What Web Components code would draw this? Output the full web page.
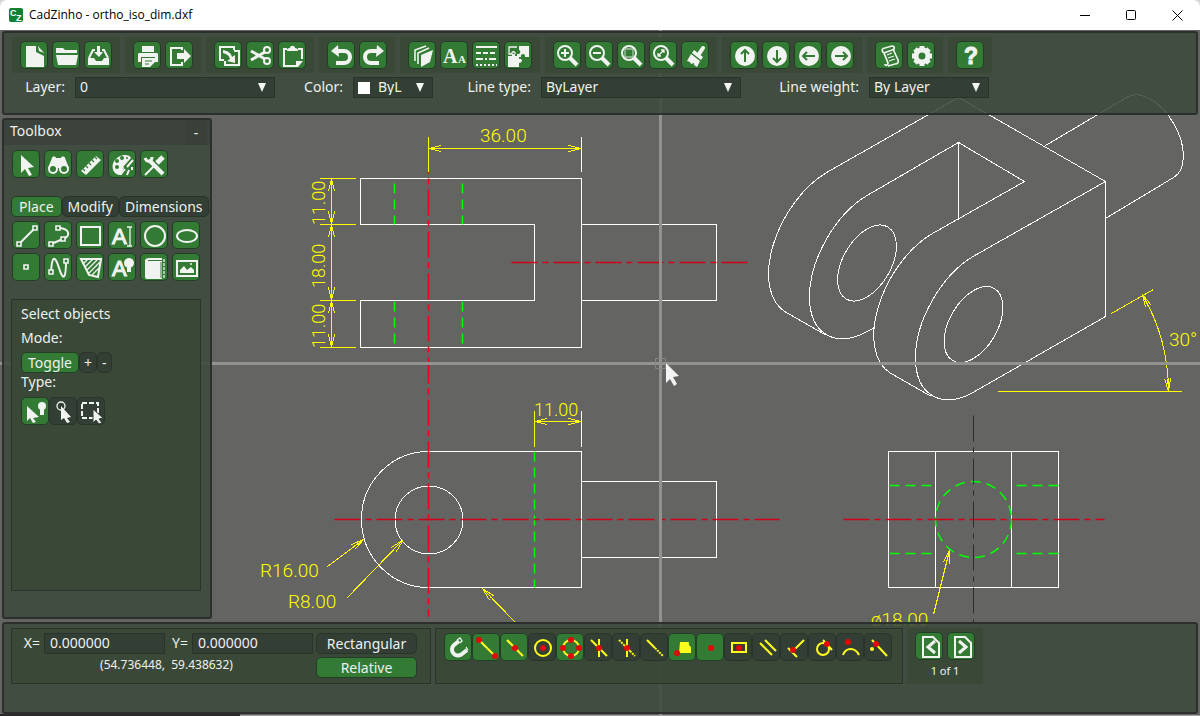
<!DOCTYPE html>
<html lang="en">
<head>
<meta charset="utf-8">
<meta name="viewport" content="width=device-width, initial-scale=1">
<title>CadZinho - ortho_iso_dim.dxf</title>
<style>
  html, body { margin: 0; height: 100%; background: #d8d8d8; }
  body { font-family: "Noto Sans", "Open Sans", sans-serif; font-size: 14px; }
</style>
</head>
<body>
<cad-app></cad-app>

<script>
const ICONS = {
  doc: '<path class="f" d="M6 5h10v6l8 4v11H6z"/><path class="f" d="M18 5l6 7-5-2z"/>',
  open: '<path class="f" d="M4 7h7l2 2h12v3H4zM4 14h22l-2 10H6z"/>',
  save: '<path class="f" d="M4 17h6l2 3h6l2-3h5v7H4z"/><path class="s" d="M5 17l4-8h2M24 17l-4-8h-2"/><path class="f" d="M13 5h3v6h3l-4 5-5-5h3z"/>',
  print: '<path class="f" d="M9 5h12v6H9zM6 12h18l1 1v8h-3v-5H8v5H5v-8z"/><path class="f" d="M9 17h13v4l-5 5H9z"/><path class="g" d="M12 20h7M12 23h4"/>',
  exp: '<path class="s" d="M17 9V7H6v17h11v-3"/><path class="f" d="M12 12h7V8l7 7-7 7v-4h-7z"/>',
  copy: '<path class="s" d="M10 19H6V6h14v3M20 10h5v14H11v-4"/><path class="f" d="M9 9c5 1 8 3 9 7l3-2v8l-8-2 3-2c-1-4-4-5-7-6z"/>',
  cut: '<circle class="s" cx="21" cy="9" r="3"/><circle class="s" cx="21" cy="20" r="3"/><path class="s" d="M5 10l14 8M5 19l14-8" style="stroke-width:3"/>',
  paste: '<path class="s" d="M9 8H6v17h12M20 8h4v10"/><path class="f" d="M9 10c0-3 2-3 3-3 0-3 5-3 5 0 2 0 3 1 3 3z"/><path class="f" d="M18 26v-6h7l-5 6z"/>',
  undo: '<path class="s" d="M10 10h7a6 6 0 0 1 0 12H9" style="stroke-width:4"/><path class="f" d="M4 10l7-6 1 12z"/>',
  redo: '<path class="s" d="M19 10h-7a6 6 0 0 0 0 12h8" style="stroke-width:4"/><path class="f" d="M25 10l-7-6-1 12z"/>',
  layers: '<path class="f" d="M13 14l12-5-3 12-9 5z"/><path class="s" d="M10 23V12l11-5M7 20V9l11-4" style="stroke-width:1.600"/>',
  fonts: '<text x="3" y="22" font-size="20">A</text><text x="18" y="22" font-size="11">A</text>',
  ltype: '<path class="s" d="M4 6h21"/><path class="s" stroke-dasharray="5 2" d="M4 12h21"/><path class="s" stroke-dasharray="7 2 2 2" d="M4 18h21"/><path class="s" stroke-dasharray="2 2" d="M4 24h21"/>',
  puzzle: '<path class="f" d="M15 5h10v11h-4c1-4-5-4-4 0h-4v-3c4 1 4-4 2-4zM4 15h4c-1-3 4-3 3 0h4v3c4-1 4 4 0 4v4H4z"/><path class="t" d="M13 6H5v7h3c-1-3 4-3 3 0"/>',
  zin: '<circle class="s" cx="12" cy="12" r="7"/><path class="s" d="M12 8v8M8 12h8"/><path class="s" d="M17 17l7 7" style="stroke-width:4"/>',
  zout: '<circle class="s" cx="12" cy="12" r="7"/><path class="s" d="M8 12h8"/><path class="s" d="M17 17l7 7" style="stroke-width:4"/>',
  zwin: '<circle class="s" cx="12" cy="12" r="7"/><path class="t" d="M8 8h8v8H8z" opacity=".6"/><path class="s" d="M17 17l7 7" style="stroke-width:4"/>',
  zfit: '<circle class="s" cx="12" cy="12" r="7"/><path class="t" d="M9 15l6-6M12 9h3v3M9 12v3h3"/><path class="s" d="M17 17l7 7" style="stroke-width:4"/>',
  brush: '<path class="s" d="M22 7l-4 6" style="stroke-width:4;stroke-linecap:round"/><path class="f" d="M13 9l9 7-2 3-9-7z"/><path class="f" d="M10 13l9 7-3 6-3-2v-2l-3 1-1-2-3-1z"/>',
  up: '<circle class="f" cx="15" cy="15" r="10"/><path class="g2" d="M15 21V10M11 13l4-4 4 4"/>',
  down: '<circle class="f" cx="15" cy="15" r="10"/><path class="g2" d="M15 9v11M11 17l4 4 4-4"/>',
  left: '<circle class="f" cx="15" cy="15" r="10"/><path class="g2" d="M21 15H10M13 11l-4 4 4 4"/>',
  right: '<circle class="f" cx="15" cy="15" r="10"/><path class="g2" d="M9 15h11M17 11l4 4-4 4"/>',
  script: '<path class="s" d="M9 12c-3-2-2-5 1-5l7-2c3 0 3 4 0 4l-8 3 4 10c0 3-3 3-3 1M18 8l5 11c1 3-1 4-3 4l-7 2" style="stroke-width:1.700"/><path class="t" d="M12 14l5-2M13 17l6-2M14 20l6-2"/>',
  gear: '<circle class="s" cx="15" cy="15" r="6" style="stroke-width:5"/><path class="s" d="M15 5v4M15 21v4M5 15h4M21 15h4M8 8l2 2M20 20l2 2M22 8l-2 2M10 20l-2 2" style="stroke-width:5"/>',
  help: '<text class="q b" x="8" y="23" font-size="23">?</text>',
  cursor: '<path class="f" d="M9 5l13 12-6 1 4 7-3 1-4-7-4 4z"/>',
  find: '<path class="f" d="M8 8c0-2 4-2 4 0h5c0-2 4-2 4 0l4 10H4z"/><circle class="f" cx="9" cy="19" r="5"/><circle class="f" cx="20" cy="19" r="5"/><circle class="h" cx="9" cy="19" r="3"/><circle class="h" cx="20" cy="19" r="3"/>',
  ruler: '<path class="f" d="M5 21L20 6l5 4-15 15z"/><path class="g" d="M7 19l2 2M10 16l2 2M13 13l2 2M16 10l2 2M19 7l2 2"/>',
  palette: '<path class="f" d="M14 25C4 26 2 14 8 9c6-6 14-4 15-1l-8 9c3 0-2 4-1 8z"/><circle class="h" cx="9" cy="17" r="2"/><circle class="h" cx="9" cy="11" r="2"/><circle class="h" cx="14" cy="8" r="2"/><circle class="h" cx="19" cy="8" r="1"/><path class="s" d="M25 10l-6 7M17 19l-4 5M21 20l-2 5M24 17v3"/>',
  tools: '<path class="s" d="M9 10l14 14" style="stroke-width:4"/><path class="s" d="M5 8c2 5 7 4 7-1" style="stroke-width:3"/><path class="s" d="M5 25l9-9"/><path class="s" d="M17 13l6-6" style="stroke-width:5"/>',
  line: '<path class="s" d="M7 23L23 7"/><path class="n" d="M5 21h4v4H5zM21 5h4v4h-4z"/>',
  pline: '<path class="s" d="M7 23l12-5c9-3 6-11-5-11"/><path class="n" d="M5 21h4v4H5zM17 16h4v4h-4zM12 5h4v4h-4z"/>',
  rect: '<path class="s" d="M5 6h19v18H5z"/>',
  text: '<text class="q" x="4" y="23" font-size="22">A</text><path class="t" d="M19 6h5M19 25h5M22 6v19"/>',
  circle: '<circle class="s" cx="15" cy="15" r="10"/>',
  ellipse: '<ellipse class="s" cx="15" cy="15" rx="10" ry="6"/>',
  point: '<path class="n" d="M12 12h4v4h-4z"/>',
  spline: '<path class="s" d="M7 19C8 2 11 2 15 15s7 12 7-7"/><path class="n" d="M5 17h4v4H5zM20 6h4v4h-4z"/>',
  hatch: '<path class="s" d="M5 6h20l-3 18-9-2z"/><path class="t" d="M7 11l5-5M9 14l8-8M11 17L22 6M12 21L24 9M16 22l7-7"/>',
  textb: '<text class="q" x="4" y="23" font-size="22">A</text><circle class="f" cx="21" cy="10" r="5"/><path class="f" d="M19 14h4v5h-4z"/>',
  book: '<path class="f" d="M5 7q1-2 4-2h13v2H8v1h14v18H7q-2 0-2-2z"/><path class="t" stroke-dasharray="3 1" d="M24 6v19"/><path class="g" d="M21 9v16" style="stroke-width:1"/>',
  image: '<path class="s" d="M5 8h20v15H5z"/><path class="f" d="M8 20v-3l4-4 3 4 4-3 3 3v3z"/><circle class="f" cx="19" cy="11" r="1"/>',
  selpt: '<path class="f" d="M6 9l12 11-6 1 3 4-3 1-3-5-3 3z"/><circle class="f" cx="21" cy="9" r="4"/><path class="f" d="M19 12h4v6h-4z"/>',
  selcirc: '<circle class="t" cx="12" cy="9" r="4"/><path class="f" d="M12 9l10 11-4 1 3 4-3 1-3-5-3 2z"/>',
  selbox: '<path class="s" stroke-dasharray="5 2" d="M5 6h16v15H5z"/><path class="o" d="M16 12l10 9-4 1 3 4-3 1-3-4-3 3z"/>',
  magnet: '<path class="s" d="M15 8l-5 4a6 6 0 0 0 8 9l5-4" style="stroke-width:4"/><path class="t" d="M13 7l3-2 2 3-2 2M22 14l2 3"/>',
  send: '<path class="y" d="M7 7l16 16"/><circle class="r" cx="7" cy="7" r="3"/><circle class="r" cx="23" cy="23" r="3"/>',
  smid: '<path class="y" d="M7 7l16 16"/><circle class="r" cx="15" cy="15" r="3"/>',
  scen: '<circle class="y" cx="15" cy="15" r="8"/><circle class="r" cx="15" cy="15" r="3"/>',
  squad: '<circle class="y" cx="15" cy="15" r="8"/><circle class="r" cx="15" cy="7" r="3"/><circle class="r" cx="15" cy="23" r="3"/><circle class="r" cx="7" cy="15" r="3"/><circle class="r" cx="23" cy="15" r="3"/>',
  sint: '<path class="y" d="M7 7l16 16M15 6v18"/><circle class="r" cx="15" cy="15" r="3"/>',
  sapp: '<path class="y" stroke-dasharray="2 1" d="M7 7l5 5M18 18l5 5"/><path class="y" d="M15 6v18M12 12l6 6"/><circle class="r" cx="15" cy="15" r="3"/>',
  sext: '<path class="y" d="M7 7l8 8"/><path class="y" stroke-dasharray="2 1" d="M15 15l8 8"/>',
  sins: '<path class="yf" d="M12 9h9q-1 3 2 5v6H11z"/><circle class="r" cx="9" cy="20" r="3"/>',
  snode: '<circle class="r" cx="15" cy="15" r="3"/>',
  srect: '<path class="y" d="M8 10h14v9H8z"/><circle class="r" cx="15" cy="15" r="3"/>',
  spar: '<path class="y" d="M8 10l12 12M13 7l11 11"/>',
  sperp: '<path class="y" d="M8 15l9 9M24 7L12 19"/><circle class="r" cx="13" cy="17" r="3"/>',
  stan: '<circle class="y" cx="15" cy="16" r="6"/><path class="y" d="M15 7l9 10"/><circle class="r" cx="19" cy="11" r="3"/>',
  sarc: '<path class="y" d="M7 22c3-8 12-8 16 0"/><circle class="r" cx="12" cy="9" r="3"/>',
  snear: '<path class="y" d="M8 7l15 16"/><circle class="yf" cx="8" cy="16" r="2"/><circle class="r" cx="12" cy="11" r="3"/>',
  prev: '<path class="s" d="M8 5h10l6 6v14H8z"/><path class="s" d="M20 9l-7 6 7 6" style="stroke-width:3"/>',
  next: '<path class="s" d="M8 5h10l6 6v14H8z"/><path class="s" d="M12 9l7 6-7 6" style="stroke-width:3"/>'
};

function define(name, html, setup) {
  const template = document.createElement('template');
  template.innerHTML = html;
  customElements.define(name, class extends HTMLElement {
    constructor() {
      super();
      this.attachShadow({ mode: 'open' }).append(template.content.cloneNode(true));
    }
    connectedCallback() { if (setup) setup(this, this.shadowRoot); }
  });
}

/* Square icon button: green by default, dark with the "off" attribute. */
define('icon-button', `
<style>
  :host { display: block; width: 28px; height: 28px; }
  button { display: block; width: 100%; height: 100%; padding: 0; border: 1px solid #223f25; border-radius: 5px; background: #337b35; }
  :host([off]) button { background: #333f34; border-color: #2a342b; }
  svg { display: block; margin: -1px; width: 28px; height: 28px; overflow: visible; --bg: #337b35; }
  :host([off]) svg { --bg: #333f34; }
  .f { fill: #f1f3f1; }
  .o { fill: #f1f3f1; stroke: var(--bg); stroke-width: 1; }
  .s { fill: none; stroke: #f1f3f1; stroke-width: 2; }
  .t { fill: none; stroke: #f1f3f1; stroke-width: 1.3; }
  .n { fill: var(--bg); stroke: #f1f3f1; stroke-width: 1.6; }
  .g { fill: none; stroke: var(--bg); stroke-width: 1.2; }
  .g2 { fill: none; stroke: var(--bg); stroke-width: 2; }
  .h { fill: var(--bg); }
  .y { fill: none; stroke: #ffff1e; stroke-width: 2; }
  .yf { fill: #ffff1e; }
  .r { fill: #e00a0a; }
  text { fill: #f1f3f1; font-family: "Liberation Serif", serif; font-weight: bold; }
  .q { font-family: "Liberation Sans", sans-serif; font-weight: normal; stroke: #f1f3f1; stroke-width: 1; }
  .b { font-weight: bold; }
</style>
<button type="button"><svg viewBox="0 0 28 28" aria-hidden="true"></svg></button>`, (host, root) => {
  root.querySelector('svg').innerHTML = ICONS[host.getAttribute('icon')];
  root.querySelector('button').setAttribute('aria-label', host.getAttribute('label') || host.getAttribute('icon'));
});

define('text-button', `
<style>
  :host { display: block; height: 21px; }
  button { display: block; width: 100%; height: 100%; padding: 0 var(--pad, 7px); border: 1px solid #2a342b; border-radius: 5px;
    background: #333f34; color: #eef0ee; font: inherit; line-height: 18px; white-space: nowrap; }
  :host([on]) button { background: #337b35; border-color: #223f25; }
</style>
<button type="button"><slot></slot></button>`);

/* Borderless group of buttons, laid in a row. */
define('tool-group', `
<style>
  :host { display: flex; gap: 4px; padding: 4px 8px; background: rgba(58, 73, 54, .85); }
</style>
<slot></slot>`);

define('select-field', `
<style>
  :host { display: flex; align-items: center; }
  label { box-sizing: border-box; width: var(--label); padding: 0 10px 2px 0; text-align: right; white-space: nowrap; }
  .box { display: grid; align-items: center; width: var(--box); height: 21px; }
  .box > * { grid-area: 1 / 1; }
  select { appearance: none; box-sizing: border-box; width: 100%; height: 21px; margin: 0; padding: 0 24px 2px 4px; border: 1px solid #2a322b;
    border-radius: 0; background: #333f34; color: #eef0ee; font: inherit; line-height: 17px; }
  svg { justify-self: end; margin-right: 8px; width: 10px; height: 9px; pointer-events: none; }
  .swatch { display: none; margin-left: 5px; width: 12px; height: 12px; background: #fff; }
  :host([swatch]) .swatch { display: block; }
  :host([swatch]) select { padding-left: 24px; }
</style>
<label for="s"></label>
<div class="box"><select id="s"><option></option></select><span class="swatch"></span>
<svg viewBox="0 0 10 9" aria-hidden="true"><path fill="#f4f6f4" d="M1 0h8L5 9z"/></svg></div>`, (host, root) => {
  root.querySelector('label').textContent = host.getAttribute('label');
  root.querySelector('option').textContent = host.getAttribute('value');
});

define('title-bar', `
<style>
  :host { display: flex; align-items: center; height: 30px; padding-left: 9px; background: #fff; color: #000; border-radius: 7px 7px 0 0;
    font: 12px/30px "Open Sans", "Noto Sans", sans-serif; }
  .logo { width: 14px; height: 14px; margin-right: 6px; }
  .logo text { fill: #fff; font: bold 9px "Liberation Sans", sans-serif; }
  h1 { flex: 1; margin: 0; font: inherit; }
  button { width: 46px; height: 30px; padding: 0; border: 0; background: none; }
  button svg { display: block; margin: auto; width: 11px; height: 11px; fill: none; stroke: #000; stroke-width: 1; }
</style>
<svg class="logo" viewBox="0 0 14 14" aria-hidden="true"><rect width="14" height="14" rx="2" fill="#118030"/><text x="1" y="8">C</text><text x="7" y="13">Z</text></svg>
<h1>CadZinho - ortho_iso_dim.dxf</h1>
<button type="button" aria-label="Minimize"><svg viewBox="0 0 11 11"><path d="M0 5.5h10"/></svg></button>
<button type="button" aria-label="Maximize"><svg viewBox="0 0 11 11"><rect x=".5" y=".5" width="9" height="9" rx="1"/></svg></button>
<button type="button" aria-label="Close"><svg viewBox="0 0 11 11"><path d="M.5 .5l10 10M10.500 .5l-10 10"/></svg></button>`);

const arrow = (x, y, deg) => `<path d="M-13 -3L0 0L-13 3M-13 0H0" transform="translate(${x} ${y}) rotate(${deg})"/>`;

/* The sheet: orthographic views, isometric view, dimensions and crosshair. */
define('cad-drawing', `
<style>
  :host { display: block; background: #646462; overflow: hidden; }
  svg { display: block; width: 100%; height: 100%; }
  g { fill: none; stroke-width: 1; }
  .white, .yellow { shape-rendering: crispEdges; }
  .white { stroke: #fff; }
  .yellow { stroke: #ff0; }
  .green, .red { stroke-width: 1.500; }
  .green { stroke: #0f0; stroke-dasharray: 10 6; }
  .red { stroke: #d00018; stroke-dasharray: 26 5 6 5; }
  .black { stroke: #2c2c2c; stroke-dasharray: 26 6 5 6; }
  text { fill: #ff0; font: 300 18px Roboto, "Open Sans", sans-serif; }
  .wide { font-size: 19px; }
</style>
<svg viewBox="0 30 1200 686" preserveAspectRatio="xMinYMin slice" role="img" aria-label="Drawing of a clevis">
 <g transform="translate(.5 .5)">
  <g class="white">
    <path d="M360 178H581V347H360V300H534V224H360zM581 224H716V300H581M581 136V171M581 410V446"/>
    <path d="M428 451H581V587H428A67 68 0 0 1 428 451zM581 481H716V557H581"/>
    <circle cx="428.500" cy="519.500" r="34"/>
    <path d="M888 451H1058V587H888zM935 451V587M1011 451V587"/>
    <path d="M1105 181L972.500 256A83.300 48.100 -60 0 0 972.500 392L1105 316z"/>
    <path d="M874 327L866.500 331A83.300 48.100 -60 0 1 866.500 195L958 142L1024 181L932 233A83.300 48.100 -60 0 0 890.500 373L931 396M958 142V219"/>
    <path d="M1105 181L958 97L827 171.500A83.300 48.100 -60 0 0 785 311.500L826 335"/>
    <path d="M1045 145L1127 96.500A45.500 26.500 60 0 1 1173 177L1105 218"/>
    <ellipse rx="41.600" ry="24" transform="translate(866.500 262.500) rotate(-60)"/>
    <ellipse rx="41.600" ry="24" transform="translate(973 324) rotate(-60)"/>
  </g>
  <g class="green">
    <path d="M394 183V224"/><path d="M462 183V224"/><path d="M394 301V347"/><path d="M462 301V347"/><path d="M534 451V587"/>
    <path d="M889 485H934"/><path d="M889 553H934"/><path d="M1016 485H1059"/><path d="M1016 553H1059"/>
    <circle cx="973" cy="519" r="38"/>
  </g>
  <g class="red">
    <path style="stroke:#f00018" stroke-dashoffset="24" d="M428 171V616"/>
    <path d="M511 262H748"/><path d="M334 519H779"/><path d="M843 519H1104"/>
  </g>
  <g class="black"><path d="M973 415V622"/></g>
  <g class="yellow">
    <path d="M428 136V171M428 148H581M319 178H355M319 224H355M319 300H355M319 347H355M331 178V347"/>
    ${arrow(581, 148, 0)}${arrow(428, 148, 180)}
    ${arrow(331, 178, -90)}${arrow(331, 224, 90)}${arrow(331, 224, -90)}${arrow(331, 300, 90)}${arrow(331, 300, -90)}${arrow(331, 347, 90)}
    <path d="M534 410V446M534 421H581"/>${arrow(581, 421, 0)}${arrow(534, 421, 180)}
    <path d="M327 566L363 539"/>${arrow(363, 539, -36)}
    <path d="M346 598L402 540"/>${arrow(402, 540, -45)}
    <path d="M515 622L482 588"/>${arrow(482, 588, 226)}
    <path d="M933 614L949 550"/>${arrow(949, 550, -76)}
    <path d="M1111 313L1153 289M997 391H1181M1142 294A195 195 0 0 1 1168 391"/>${arrow(1142, 294, -116)}${arrow(1168, 391, 86)}
  </g>
 </g>
 <text class="wide" x="480" y="142">36.00</text>
 <text transform="translate(325 225) rotate(-90)">11.00</text>
 <text transform="translate(325 288) rotate(-90)">18.00</text>
 <text transform="translate(325 348) rotate(-90)">11.00</text>
 <text x="534" y="416">11.00</text>
 <text class="wide" x="260" y="577">R16.00</text>
 <text class="wide" x="288" y="608">R8.00</text>
 <text class="wide" x="871" y="626">ø18.00</text>
 <text class="wide" x="1169" y="346">30°</text>
 <path fill="#929291" d="M0 362H1200V365H0zM659 30H662V716H659z"/>
 <path fill="none" stroke="#858583" d="M655.500 358.500h10v10h-10z"/>
 <path fill="#f4f4f4" d="M666 363l13 13-6 1 4 7-3 2-4-7-4 4z"/>
 <path fill="#2a2a2a" d="M0 714H240V716H0z"/>
 <path fill="#a0a0a0" d="M240 715H1200V716H240z"/>
</svg>`);

define('main-toolbar', `
<style>
  :host { display: block; box-sizing: border-box; min-height: 84px; padding: 4px 8px; border: 2px solid #2c302c; border-radius: 3px; background: rgba(60, 74, 60, .88); }
  .tools { display: flex; gap: 5px; }
  .fields { display: flex; margin-top: 4px; }
</style>
<div class="tools">
  <tool-group><icon-button icon="doc" label="New"></icon-button><icon-button icon="open"></icon-button><icon-button icon="save"></icon-button></tool-group>
  <tool-group><icon-button icon="print"></icon-button><icon-button icon="exp" label="Export"></icon-button></tool-group>
  <tool-group><icon-button icon="copy"></icon-button><icon-button icon="cut"></icon-button><icon-button icon="paste"></icon-button></tool-group>
  <tool-group><icon-button icon="undo"></icon-button><icon-button icon="redo"></icon-button></tool-group>
  <tool-group><icon-button icon="layers"></icon-button><icon-button icon="fonts"></icon-button><icon-button icon="ltype" label="Line types"></icon-button><icon-button icon="puzzle" label="Blocks"></icon-button></tool-group>
  <tool-group><icon-button icon="zin" label="Zoom in"></icon-button><icon-button icon="zout" label="Zoom out"></icon-button><icon-button icon="zwin" label="Zoom window"></icon-button><icon-button icon="zfit" label="Zoom all"></icon-button><icon-button icon="brush" label="Redraw"></icon-button></tool-group>
  <tool-group><icon-button icon="up"></icon-button><icon-button icon="down"></icon-button><icon-button icon="left"></icon-button><icon-button icon="right"></icon-button></tool-group>
  <tool-group><icon-button icon="script"></icon-button><icon-button icon="gear" label="Settings"></icon-button></tool-group>
  <tool-group><icon-button icon="help"></icon-button></tool-group>
</div>
<div class="fields">
  <select-field label="Layer:" value="0" style="--label:63px;--box:200px"></select-field>
  <select-field label="Color:" value="ByL" swatch style="--label:78px;--box:80px"></select-field>
  <select-field label="Line type:" value="ByLayer" style="--label:108px;--box:200px"></select-field>
  <select-field label="Line weight:" value="By Layer" style="--label:128px;--box:120px"></select-field>
</div>`);

define('tool-box', `
<style>
  :host { display: flex; flex-direction: column; box-sizing: border-box; width: 210px; border: 2px solid #2c302c; border-radius: 3px; background: rgba(60, 74, 60, .88); }
  header { display: flex; justify-content: space-between; height: 25px; padding: 0 4px 0 6px; background: #3c423c; line-height: 21px; }
  h2, p { margin: 0; font: inherit; }
  header button { width: 20px; padding: 0; border: 0; background: #393f39; color: inherit; font: inherit; }
  .row { display: flex; gap: 4px; margin: 5px 0 0 8px; }
  .tabs { display: flex; margin: 18px 0 0 7px; --pad: 5px; }
  .tabs text-button[on] { --pad: 7px; }
  .grid { display: grid; grid-template-columns: repeat(6, 28px); gap: 4px; margin: 4px 0 0 8px; }
  section { flex: 1; box-sizing: border-box; margin: 18px 9px 26px 7px; padding: 2px 9px; border: 1px solid #2b332b; background: #3a4937; line-height: 24px; }
  .mode, .type { display: flex; }
  .mode { margin-top: 2px; --pad: 4px; }
  .mode text-button[on] { --pad: 6px; }
  .type { margin-top: 6px; }
  .tight { line-height: 18px; }
</style>
<header><h2>Toolbox</h2><button type="button">-</button></header>
<div class="row"><icon-button icon="cursor"></icon-button><icon-button icon="find"></icon-button><icon-button icon="ruler"></icon-button><icon-button icon="palette"></icon-button><icon-button icon="tools"></icon-button></div>
<div class="tabs"><text-button on>Place</text-button><text-button>Modify</text-button><text-button>Dimensions</text-button></div>
<div class="grid"><icon-button icon="line"></icon-button><icon-button icon="pline"></icon-button><icon-button icon="rect"></icon-button><icon-button icon="text"></icon-button><icon-button icon="circle"></icon-button><icon-button icon="ellipse"></icon-button>
<icon-button icon="point"></icon-button><icon-button icon="spline"></icon-button><icon-button icon="hatch"></icon-button><icon-button icon="textb"></icon-button><icon-button icon="book"></icon-button><icon-button icon="image"></icon-button></div>
<section>
  <p>Select objects</p>
  <p>Mode:</p>
  <div class="mode"><text-button on>Toggle</text-button><text-button>+</text-button><text-button>-</text-button></div>
  <p class="tight">Type:</p>
  <div class="type"><icon-button icon="selpt"></icon-button><icon-button icon="selcirc" off></icon-button><icon-button icon="selbox" off></icon-button></div>
</section>`);

define('status-bar', `
<style>
  :host { display: flex; align-items: flex-start; gap: 4px; box-sizing: border-box; min-height: 92px; padding: 4px 7px; border: 2px solid #2c302c; border-radius: 3px; background: rgba(60, 74, 60, .88); }
  .frame { box-sizing: border-box; height: 56px; border: 1px solid #2b332b; background: rgba(58, 73, 54, .9); }
  .coords { display: grid; grid-template: 21px 21px / 32px 121px 27px 121px 104px; row-gap: 3px; align-items: center; padding: 4px 13px 0 0; }
  label { padding: 0 4px 2px 0; text-align: right; }
  input { box-sizing: border-box; width: 100%; height: 21px; margin: 0; padding: 0 5px 2px; border: 1px solid #2a322b; background: #333f34; color: #eef0ee; font: inherit; line-height: 17px; }
  output { grid-column: 1 / 5; padding-left: 8px; text-align: center; font-size: 12px; line-height: 16px; white-space: pre; align-self: start; }
  text-button { margin-left: 3px; }
  .snaps { display: flex; padding: 4px 10px 0 8px; }
  .pages { box-sizing: border-box; height: 56px; padding: 4px 8px; background: #3a4937; text-align: center; font-size: 11px; line-height: 22px; }
  .pages div { display: flex; gap: 4px; }
</style>
<div class="frame coords">
  <label for="x">X=</label><input id="x" value="0.000000"><label for="y">Y=</label><input id="y" value="0.000000"><text-button>Rectangular</text-button>
  <output>(54.736448,  59.438632)</output><text-button on>Relative</text-button>
</div>
<div class="frame snaps">
  <icon-button icon="magnet"></icon-button><icon-button icon="send"></icon-button><icon-button icon="smid"></icon-button><icon-button icon="scen" off></icon-button><icon-button icon="squad"></icon-button><icon-button icon="sint" off></icon-button><icon-button icon="sapp" off></icon-button><icon-button icon="sext" off></icon-button><icon-button icon="sins"></icon-button><icon-button icon="snode"></icon-button><icon-button icon="srect" off></icon-button><icon-button icon="spar" off></icon-button><icon-button icon="sperp" off></icon-button><icon-button icon="stan" off></icon-button><icon-button icon="sarc" off></icon-button><icon-button icon="snear" off></icon-button>
</div>
<div class="pages"><div><icon-button icon="prev"></icon-button><icon-button icon="next"></icon-button></div>1 of 1</div>`);

define('cad-app', `
<style>
  :host { display: flex; flex-direction: column; min-height: 100vh; color: #eef0ee; }
  main { flex: 1; display: grid; grid-template: auto 1fr auto / minmax(0, 1fr); row-gap: 3px; padding: 1px 2px 2px; position: relative; }
  cad-drawing { position: absolute; inset: 0; }
  main > :not(cad-drawing) { position: relative; }
</style>
<title-bar></title-bar>
<main>
  <cad-drawing></cad-drawing>
  <main-toolbar></main-toolbar>
  <tool-box></tool-box>
  <status-bar></status-bar>
</main>`);
</script>
</body>
</html>
